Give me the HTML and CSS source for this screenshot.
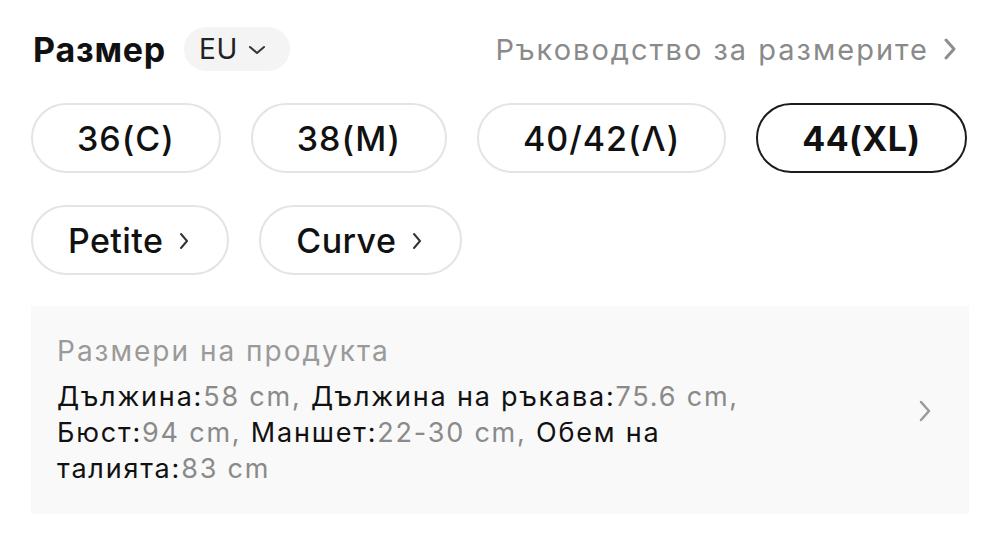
FILE: index.html
```html
<!DOCTYPE html>
<html lang="bg">
<head>
<meta charset="utf-8">
<title>Размер</title>
<link rel="stylesheet" href="styles.css">
</head>
<body>
<div class="page">
  <div class="header">
    <div class="header-left">
      <h2 class="title">Размер</h2>
      <button class="region">EU
        <svg class="region-chev" width="18" height="10" viewBox="0 0 18 10"><path d="M2 2 L9 8 L16 2" fill="none" stroke="#333" stroke-width="2" stroke-linecap="round" stroke-linejoin="round"/></svg>
      </button>
    </div>
    <a class="guide">Ръководство за размерите
      <svg class="guide-chev" width="16" height="22" viewBox="0 0 16 22"><path d="M4 2 L12 11 L4 20" fill="none" stroke="#8e8e8e" stroke-width="3" stroke-linecap="round" stroke-linejoin="round"/></svg>
    </a>
  </div>

  <div class="sizes">
    <button class="size">36(C)</button>
    <button class="size">38(M)</button>
    <button class="size">40/42(Λ)</button>
    <button class="size selected">44(XL)</button>
  </div>

  <div class="sizes">
    <button class="size fit">Petite
      <svg class="fit-chev" width="12" height="18" viewBox="0 0 12 18"><path d="M3 2 L9 9 L3 16" fill="none" stroke="#333" stroke-width="2" stroke-linecap="round" stroke-linejoin="round"/></svg>
    </button>
    <button class="size fit">Curve
      <svg class="fit-chev" width="12" height="18" viewBox="0 0 12 18"><path d="M3 2 L9 9 L3 16" fill="none" stroke="#333" stroke-width="2" stroke-linecap="round" stroke-linejoin="round"/></svg>
    </button>
  </div>

  <div class="measure">
    <div class="measure-text">
      <div class="measure-title">Размери на продукта</div>
      <p class="measure-body"><span class="lbl">Дължина:</span><span class="val">58 cm, </span><span class="lbl">Дължина на ръкава:</span><span class="val">75.6 cm, </span><span class="lbl">Бюст:</span><span class="val">94 cm, </span><span class="lbl">Маншет:</span><span class="val">22-30 cm, </span><span class="lbl">Обем на </span><span class="lbl">талията:</span><span class="val">83 cm</span></p>
    </div>
    <svg class="measure-chev" width="16" height="24" viewBox="0 0 16 24"><path d="M4 3 L12 12 L4 21" fill="none" stroke="#9a9a9a" stroke-width="2.5" stroke-linecap="round" stroke-linejoin="round"/></svg>
  </div>
</div>
</body>
</html>
```

FILE: styles.css
```css
* { box-sizing: border-box; }
html, body {
  margin: 0;
  padding: 0;
  background: #ffffff;
}
body {
  font-family: "Inter", "Noto Sans", "Liberation Sans", sans-serif;
  color: #111111;
}
.page {
  padding: 27px 31px 0 31px;
}
.header {
  display: flex;
  align-items: center;
  justify-content: space-between;
  height: 44px;
}
.header-left {
  display: flex;
  align-items: center;
  gap: 18px;
  padding-left: 2px;
}
.title {
  margin: 0;
  font-size: 34px;
  font-weight: 700;
  color: #111;
  letter-spacing: 0.8px;
}
.region {
  display: flex;
  align-items: center;
  gap: 10px;
  height: 44px;
  padding: 0 24px 0 15px;
  border: none;
  border-radius: 22px;
  background: #f4f4f4;
  font-family: inherit;
  font-size: 28px;
  letter-spacing: 0.5px;
  color: #222;
}
.region-chev { margin-top: 2px; }
.guide {
  display: flex;
  align-items: center;
  gap: 13px;
  font-size: 29px;
  letter-spacing: 2px;
  color: #8a8a8a;
  padding-right: 11px;
}
.sizes {
  display: flex;
  gap: 30px;
  margin-top: 32px;
}
.size {
  display: flex;
  align-items: center;
  justify-content: center;
  height: 70px;
  padding: 0 44px;
  border: 2px solid #e4e4e4;
  border-radius: 35px;
  background: #fff;
  font-family: inherit;
  font-size: 34px;
  font-weight: 500;
  letter-spacing: 1px;
  color: #111;
}
.size.selected {
  border-color: #1c1c1c;
  font-weight: 700;
  letter-spacing: 0.4px;
}
.size.fit {
  padding: 0 37px 0 35px;
  gap: 15px;
  letter-spacing: 0.4px;
}
.fit-chev { margin-top: 2px; }
.measure {
  display: flex;
  align-items: center;
  margin-top: 31px;
  background: #f9f9f9;
  padding: 28px 36px 27px 26px;
}
.measure-text {
  flex: 1;
}
.measure-title {
  font-size: 28px;
  line-height: 34px;
  letter-spacing: 2px;
  color: #9a9a9a;
}
.measure-body {
  margin: 11px 0 0 0;
  max-width: 735px;
  font-size: 27px;
  line-height: 36px;
  letter-spacing: 1.8px;
}
.lbl { color: #111; }
.val { color: #8a8a8a; }
.measure-chev { flex: none; }
```
